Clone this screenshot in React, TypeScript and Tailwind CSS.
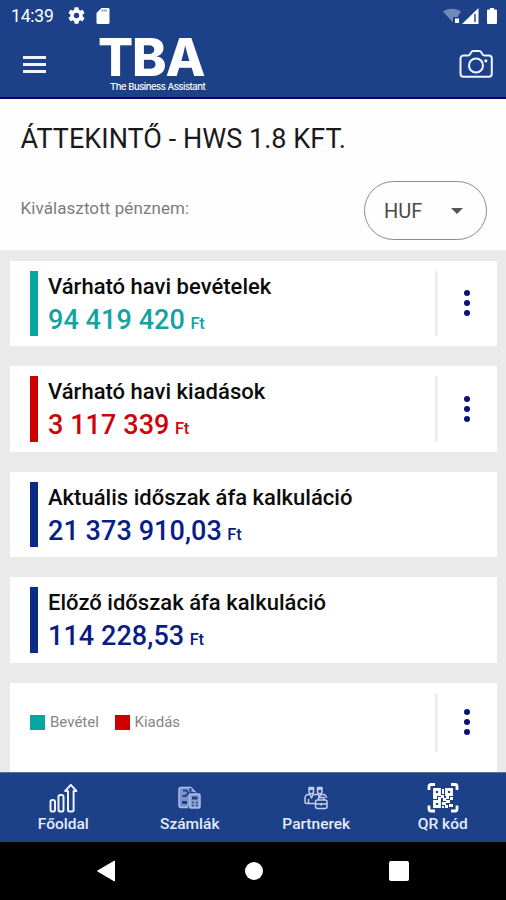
import React from "react";

function StatusBar() {
  return (
    <div className="flex h-8 items-center pl-[11px] pr-[8px] text-white">
      <span className="w-[57px] text-[17.5px] leading-8 tracking-[-0.2px]">14:39</span>
      <svg className="-mt-px h-[17px] w-[17px]" viewBox="2 2 20 20" fill="#fff">
        <path d="M19.14 12.94c.04-.3.06-.61.06-.94s-.02-.64-.07-.94l2.03-1.58a.49.49 0 0 0 .12-.61l-1.92-3.32a.49.49 0 0 0-.59-.22l-2.39.96a7 7 0 0 0-1.62-.94l-.36-2.54A.48.48 0 0 0 13.92 2.4h-3.84a.48.48 0 0 0-.47.41l-.36 2.54c-.59.24-1.13.57-1.62.94l-2.39-.96a.48.48 0 0 0-.59.22L2.74 8.870a.47.47 0 0 0 .12.61l2.03 1.58a6 6 0 0 0 0 1.88l-2.03 1.58a.49.49 0 0 0-.12.61l1.92 3.32c.12.22.37.29.59.22l2.39-.96c.5.38 1.03.7 1.62.94l.36 2.54c.05.24.24.41.48.41h3.84c.24 0 .44-.17.47-.41l.36-2.54a7 7 0 0 0 1.62-.94l2.39.96c.22.08.47 0 .59-.22l1.92-3.32a.47.47 0 0 0-.12-.61zM12 15.200a3.200 3.200 0 1 1 0-6.400 3.200 3.200 0 0 1 0 6.400z" />
      </svg>
      <svg className="-mt-px ml-[11px] h-4 w-[14px]" viewBox="0 0 13 16">
        <path d="M5 0h6.700A1.300 1.300 0 0 1 13 1.300V14.500A1.500 1.500 0 0 1 11.500 16h-10A1.500 1.500 0 0 1 0 14.500V5z" fill="#fff" />
        <path d="M5 2.500h6" stroke="#7e93c2" strokeWidth="2" strokeDasharray="1.400 0.600" />
      </svg>
      <svg className="ml-auto -mt-px h-[18px] w-[56px]" viewBox="0 0 56 18">
        <path d="M1 4.500C6 .8 14 .8 19 4.500L15.500 10H11v5.500z" fill="#7188bb" />
        <rect x="13" y="11.500" width="4" height="4.500" fill="#fff" />
        <path d="M20 17 36.500 1v16z" fill="#fff" />
        <path d="M33 7v8" stroke="#4a67a4" strokeWidth="1.800" />
        <path d="M46 2.500h2V1h4v1.500h2a1 1 0 0 1 1 1V16a1 1 0 0 1-1 1h-8a1 1 0 0 1-1-1V3.500a1 1 0 0 1 1-1z" fill="#fff" />
      </svg>
    </div>
  );
}

function Header() {
  return (
    <div className="flex h-[67px] border-b-2 border-[#07086d] pl-[23px] pr-[13px]">
      <div className="mt-[24px] flex h-[17px] w-[23px] flex-col justify-between">
        <div className="h-[3px] bg-[#f2f3ff]" />
        <div className="h-[3px] bg-[#f2f3ff]" />
        <div className="h-[3px] bg-[#f2f3ff]" />
      </div>
      <div className="ml-[52px] w-[112px] whitespace-nowrap font-[Inter,sans-serif] text-white">
        <div className="pt-[2px] text-[52px] font-extrabold leading-[48px] tracking-[-1.1px]">TBA</div>
        <div className="-mt-[1px] ml-[12px] text-[9.5px] font-medium leading-[11px] tracking-[-0.47px]">The Business Assistant</div>
      </div>
      <svg className="ml-auto mt-[17px] h-[30px] w-[34px]" viewBox="0 0 34 30" fill="none" stroke="#f2f4ff" strokeWidth="2" strokeLinejoin="round">
        <path d="M4.500 6.500H9c1.500 0 2-.8 2.600-2.200C12.300 2.600 12.600 2 14 2h6.500c1.400 0 1.700.6 2.400 2.300.6 1.400 1.100 2.200 2.600 2.200h4.300a3 3 0 0 1 3 3v15.300a3 3 0 0 1-3 3H4.500a3 3 0 0 1-3-3V9.500a3 3 0 0 1 3-3z" />
        <circle cx="17" cy="16.500" r="7" />
        <circle cx="26.800" cy="11.800" r="1.600" fill="#f2f4ff" stroke="none" />
      </svg>
    </div>
  );
}

function MoreMenu() {
  return (
    <div className="flex w-[61.5px] flex-col items-center justify-center gap-[3.8px] border-l-[3px] border-[#f0f0f0]">
      <i className="block h-[6px] w-[6px] rounded-full bg-[#07107c]" />
      <i className="block h-[6px] w-[6px] rounded-full bg-[#07107c]" />
      <i className="block h-[6px] w-[6px] rounded-full bg-[#07107c]" />
    </div>
  );
}

interface CardProps {
  title: string;
  amount: string;
  bar: string;
  color: string;
  menu?: boolean;
}

function Card({ title, amount, bar, color, menu }: CardProps) {
  return (
    <div className="flex h-[85.5px] shrink-0 bg-white py-[10px] pl-[20px]">
      <div className={`w-[7.5px] ${bar}`} />
      <div className="ml-[10.5px] flex-1 whitespace-nowrap pt-[2px] font-medium">
        <div className="text-[22px] leading-[27px] tracking-[0.02px] text-[#0c0c0c]">{title}</div>
        <div className={`mt-[4px] text-[27px] leading-[32px] ${color}`}>
          <span className="tracking-[0.07px]">{amount}</span>
          <span className="ml-[5.5px] text-[16.5px] tracking-[-0.2px]">Ft</span>
        </div>
      </div>
      {menu && <MoreMenu />}
    </div>
  );
}

const tabs = [
  {
    label: "Főoldal",
    icon: (
      <svg className="h-[30px] w-[32px]" viewBox="0 0 32 30" fill="none" stroke="#eef1ff" strokeWidth="2" strokeLinejoin="round">
        <rect x="3.500" y="17" width="4.500" height="11.500" rx="1.800" />
        <rect x="11.500" y="12" width="5" height="16.500" rx="1.800" />
        <path d="M21 27V8H18.200L23.800 1.800 29.400 8H26.600V27a1.500 1.500 0 0 1-1.500 1.500h-2.600A1.500 1.500 0 0 1 21 27z" />
      </svg>
    ),
  },
  {
    label: "Számlák",
    icon: (
      <svg className="h-[30px] w-[32px]" viewBox="0 0 32 30" fill="none" stroke="#aebde3" strokeWidth="1.500" strokeLinejoin="round">
        <path d="M14 24.500H7a2 2 0 0 1-2-2V6.500a2 2 0 0 1 2-2h10l4.500 5v2" fill="#7c94ca" />
        <path d="M9 7.500h3.500l2 2.500-3 3H8.500M16.500 5v5h5" stroke="#1c4188" strokeWidth="1.800" />
        <path d="M8 18h5v3H8z" fill="#1c4188" stroke="none" />
        <rect x="15.500" y="11" width="10.500" height="14" rx="1.500" fill="#879dcd" />
        <rect x="18" y="13.500" width="5.500" height="3" fill="#1c4188" stroke="none" />
        <path d="M18 19.500h1.500M22 19.500h1.500M18 22.500h1.500M22 22.500h1.500" stroke="#1c4188" />
      </svg>
    ),
  },
  {
    label: "Partnerek",
    icon: (
      <svg className="h-[30px] w-[32px]" viewBox="0 0 32 30" fill="none" stroke="#c3cfec" strokeWidth="1.500" strokeLinejoin="round">
        <path d="M9 4.500h4.500v4a2.250 2.250 0 0 1-4.500 0zM17.500 4.500H22v4a2.250 2.250 0 0 1-4.500 0z" />
        <path d="M9 6h4.500M17.500 6H22" strokeWidth="2" />
        <path d="M15 20.500H6.500A1.500 1.500 0 0 1 5 19v-4a3.500 3.500 0 0 1 3.500-3.500H10l1.500 3.500 1.500-3.500h5l1.500 2 1.500-2h2a3.500 3.500 0 0 1 3.500 3.500M8.500 16v4" />
        <rect x="15.500" y="17" width="11.500" height="8.500" rx="2" />
        <path d="M18.500 17v-2.500h5.500V17M15.500 21h11.500M21.200 20v2.500" />
      </svg>
    ),
  },
  {
    label: "QR kód",
    icon: (
      <svg className="h-[30px] w-[32px]" viewBox="0 0 32 30" fill="none" stroke="#fff">
        <path d="M2 7V3.500a2 2 0 0 1 2-2h4M24 1.500h4a2 2 0 0 1 2 2V7M30 22.500V26a2 2 0 0 1-2 2h-4M8 28H4a2 2 0 0 1-2-2v-3.500" strokeWidth="2.800" />
        <path d="M7.500 6.500h5v5h-5zM19.500 6.500h5v5h-5zM7.500 18.500h5v5h-5z" strokeWidth="2.800" />
        <path d="M15 6h2v5h-2zM14 12h3v3h-3zM6 13h4v3H6zM19 13h3v3h-3zM23 14h3v3h-3zM11 14h3v3h-3zM16 15h3v3h-3zM19 17h4v3h-4zM15 19h4v3h-4zM22 21h4v3h-4zM18 22h3v3h-3zM15 23h2v2h-2z" fill="#fff" stroke="none" />
      </svg>
    ),
  },
];

export default function App() {
  return (
    <div className="flex h-[900px] w-[506px] flex-col overflow-hidden bg-[#eaeaea] font-[Roboto,sans-serif]">
      <div className="bg-[#1c4188]">
        <StatusBar />
        <Header />
      </div>

      <div className="h-[151px] shrink-0 bg-[#fefefe] pl-[20.5px] pr-[19px] pt-[21.5px]">
        <h1 className="whitespace-nowrap text-[27px] leading-[36px] tracking-[0.03px] text-[#1a1a1a]">ÁTTEKINTŐ - HWS 1.8 KFT.</h1>
        <div className="mt-[24.5px] flex justify-between">
          <span className="pt-[15px] text-[17px] leading-[24px] tracking-[0.08px] text-[#7c7c7c]">Kiválasztott pénznem:</span>
          <div className="flex h-[59px] w-[123px] items-center justify-between rounded-full border border-[#8b8b8b] pl-[19px] pr-[23px]">
            <span className="text-[20px] leading-[28px] text-[#4a4a4a]">HUF</span>
            <div className="h-0 w-0 border-x-[6px] border-t-[6px] border-x-transparent border-t-[#555]" />
          </div>
        </div>
      </div>

      <div className="flex h-[522px] shrink-0 flex-col gap-[20px] overflow-hidden pl-[10px] pr-[9.5px] pt-[10.5px]">
        <Card title="Várható havi bevételek" amount="94 419 420" bar="bg-[#06a7a3]" color="text-[#13a3a1]" menu />
        <Card title="Várható havi kiadások" amount="3 117 339" bar="bg-[#cf0000]" color="text-[#cc0409]" menu />
        <Card title="Aktuális időszak áfa kalkuláció" amount="21 373 910,03" bar="bg-[#082b85]" color="text-[#081e85]" />
        <Card title="Előző időszak áfa kalkuláció" amount="114 228,53" bar="bg-[#082b85]" color="text-[#081e85]" />
        <div className="flex h-[110px] shrink-0 items-start bg-white pl-[20px] pt-[10px]">
          <div className="mt-[19.5px] flex flex-1 items-center text-[15px] leading-[20px] text-[#858585]">
            <div className="h-[15px] w-[15px] bg-[#06a7a3]" />
            <span className="ml-[5px] w-[64.5px]">Bevétel</span>
            <div className="h-[15px] w-[15px] bg-[#cf0000]" />
            <span className="ml-[5px]">Kiadás</span>
          </div>
          <div className="flex h-[59px]">
            <MoreMenu />
          </div>
        </div>
      </div>

      <nav className="flex h-[70px] shrink-0 border-t border-[#57709f] bg-[#1c4188]">
        {tabs.map((t) => (
          <div key={t.label} className="flex flex-1 flex-col items-center pt-[9.5px]">
            {t.icon}
            <span className="text-[15.5px] font-medium leading-[23px] text-[#e6ebff]">{t.label}</span>
          </div>
        ))}
      </nav>

      <div className="flex h-[58px] shrink-0 items-center bg-black pl-[97px] pr-[97px]">
        <svg className="h-[22px] w-[18px]" viewBox="0 0 18 22" fill="#fff">
          <path d="M17.500 1v20L.5 11z" stroke="#fff" strokeLinejoin="round" />
        </svg>
        <div className="ml-[129.5px] h-[18px] w-[18px] rounded-full bg-white" />
        <div className="ml-[126.5px] h-[20px] w-[20px] shrink-0 rounded-[2px] bg-white" />
      </div>
    </div>
  );
}
